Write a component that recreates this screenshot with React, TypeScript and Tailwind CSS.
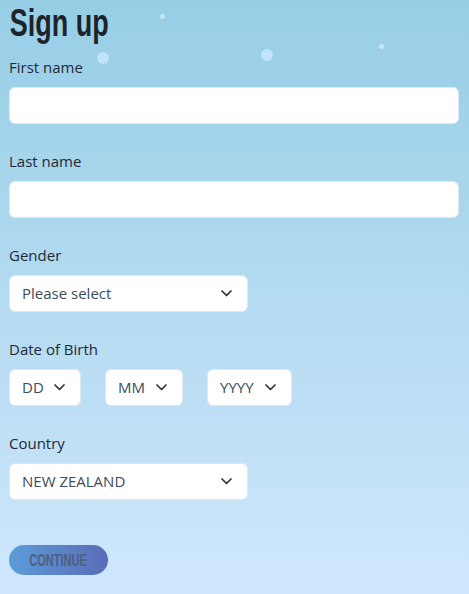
import * as React from "react";

const labelCls =
  "block h-[22px] text-[15px] leading-[22px] text-[#1f2a36] font-['Open_Sans',sans-serif]";

function Chevron() {
  return (
    <svg width="11" height="7" viewBox="0 0 11 7" className="shrink-0">
      <polyline points="1,1 5.5,5.5 10,1" fill="none" stroke="#2b3440" strokeWidth="1.7" strokeLinecap="round" strokeLinejoin="round" />
    </svg>
  );
}

function Select({ value, width }: { value: string; width: string }) {
  return (
    <div
      className={`flex h-[37px] items-center justify-between rounded-md border border-[#dfe8f0] bg-white pl-[12px] pr-[15px] ${width}`}
    >
      <span className="text-[15px] text-[#3c4b5e] font-['Open_Sans',sans-serif]">{value}</span>
      <Chevron />
    </div>
  );
}

function Field({ label, children }: { label: string; children: React.ReactNode }) {
  return (
    <div>
      <label className={labelCls}>{label}</label>
      <div className="mt-[9px]">{children}</div>
    </div>
  );
}

export default function App() {
  return (
    <div className="relative h-[594px] w-full overflow-hidden bg-gradient-to-b from-[#96cee6] to-[#cfe7fc]">
      {/* bokeh dots */}
      <span className="absolute left-[160px] top-[14px] h-[5px] w-[5px] rounded-full bg-[#c5e6fa]" />
      <span className="absolute left-[97px] top-[52px] h-[12px] w-[12px] rounded-full bg-[#c3e2fb]" />
      <span className="absolute left-[261px] top-[49px] h-[12px] w-[12px] rounded-full bg-[#c3e2fb]" />
      <span className="absolute left-[379px] top-[44px] h-[5px] w-[5px] rounded-full bg-[#c5e6fa]" />

      <div className="relative px-[9px] pt-[4px]">
        <h1 className="origin-left scale-x-[0.71] pl-[1px] text-[38px] font-bold leading-[38px] text-[#1e2329] font-['Liberation_Sans',sans-serif]">
          Sign up
        </h1>

        <div className="mt-[14px] flex flex-col gap-[26px]">
          <Field label="First name">
            <input className="block h-[37px] w-[450px] rounded-md border border-[#dfe8f0] bg-white px-3 outline-none" />
          </Field>
          <Field label="Last name">
            <input className="block h-[37px] w-[450px] rounded-md border border-[#dfe8f0] bg-white px-3 outline-none" />
          </Field>
          <Field label="Gender">
            <Select value="Please select" width="w-[239px]" />
          </Field>
          <Field label="Date of Birth">
            <div className="flex gap-[24px]">
              <Select value="DD" width="w-[72px]" />
              <Select value="MM" width="w-[78px]" />
              <Select value="YYYY" width="w-[85px]" />
            </div>
          </Field>
          <Field label="Country">
            <Select value="NEW ZEALAND" width="w-[239px]" />
          </Field>
        </div>

        <button className="mt-[45px] flex h-[30px] w-[99px] items-center justify-center rounded-full bg-gradient-to-r from-[#5b9cd9] to-[#5a6cb7]">
          <span className="inline-block scale-x-[0.67] text-[16.5px] font-bold text-[#4d5f80] font-['Liberation_Sans',sans-serif]">
            CONTINUE
          </span>
        </button>
      </div>
    </div>
  );
}
